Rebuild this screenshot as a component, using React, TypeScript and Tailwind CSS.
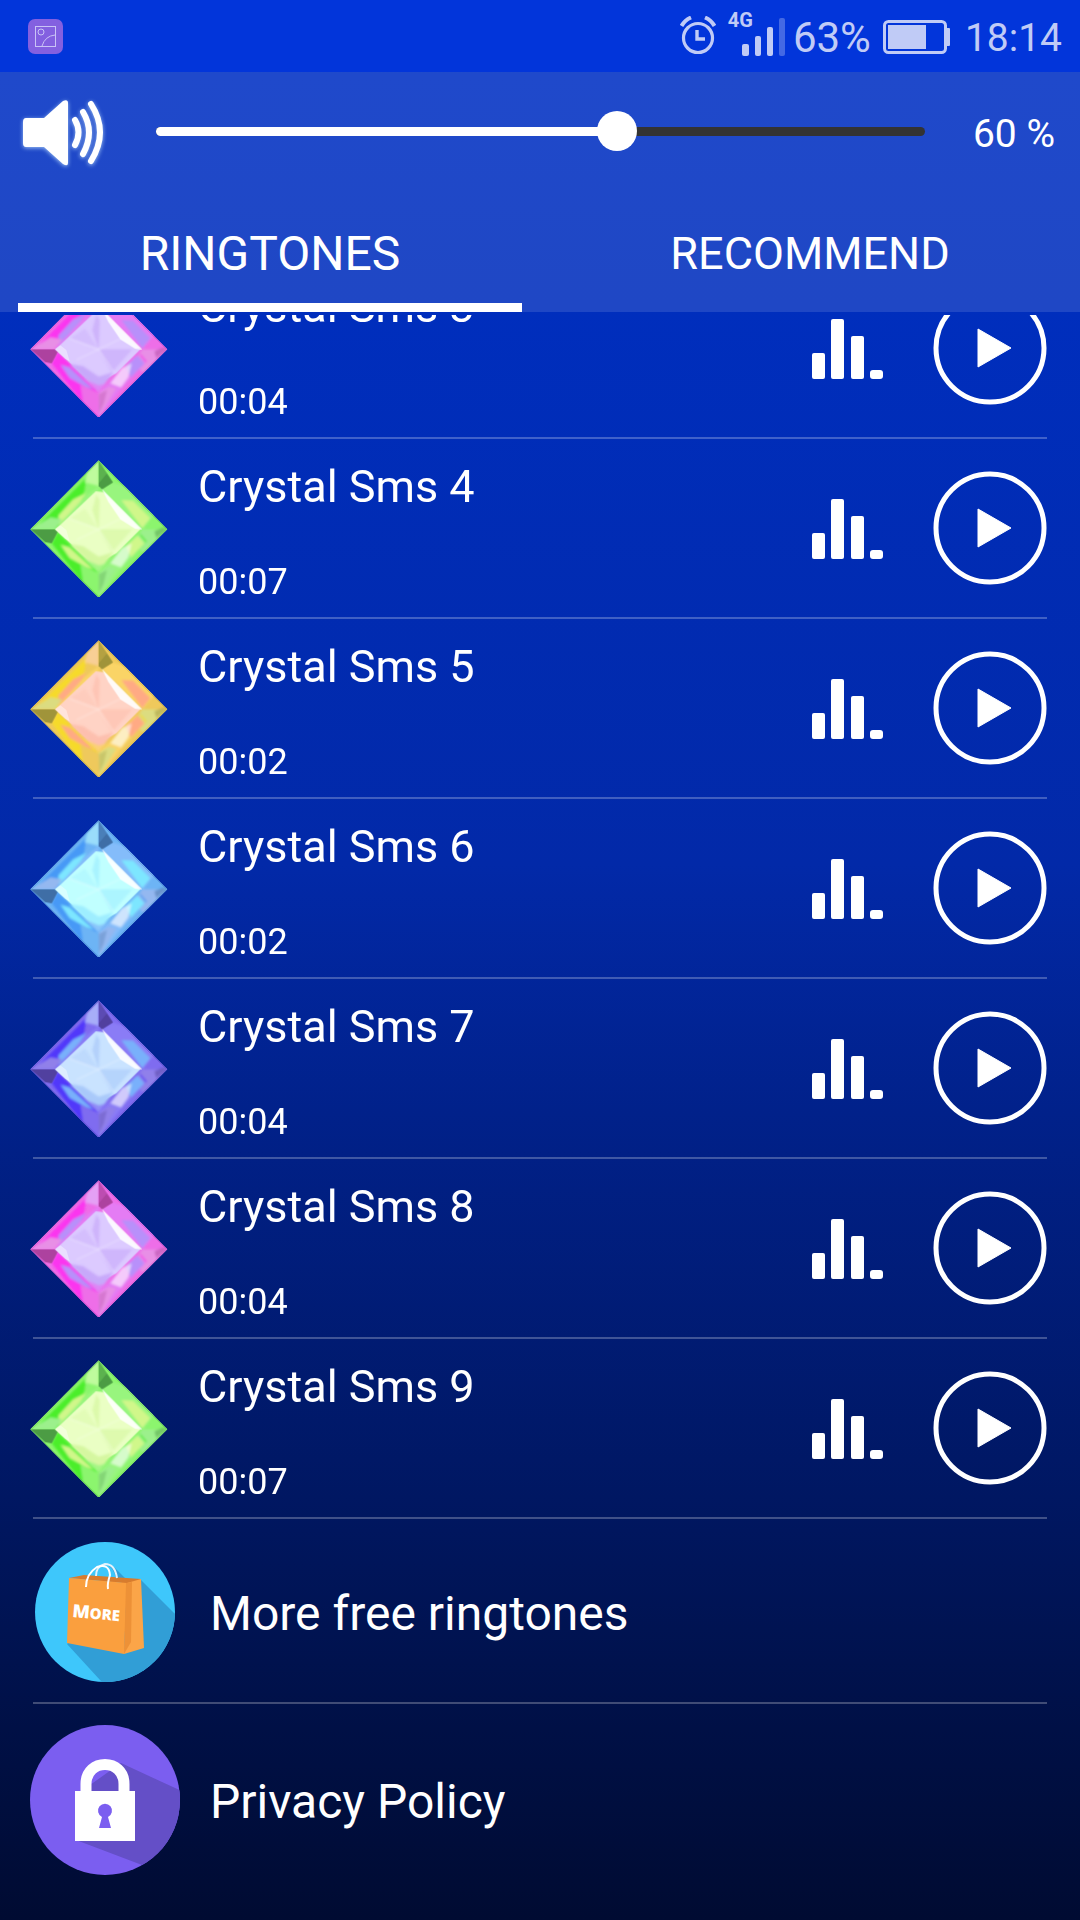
import { useState } from "react";

type GemPalette = {
  rim: string;
  deep: string;
  tint: string;
  patch: string;
  dark: string;
  inner: string;
  shade: string;
  soft: string;
};

const palettes: Record<string, GemPalette> = {
  pink: { rim: "#ee6ee8", deep: "#fb35ef", tint: "#e47cf4", patch: "#b890fa", dark: "#ad429f", inner: "#dccaff", shade: "#c7a9fa", soft: "#e88fe6" },
  green: { rim: "#8cf56e", deep: "#4bee2c", tint: "#98f57e", patch: "#d0f78a", dark: "#4c9c44", inner: "#eaffc4", shade: "#d5f7a0", soft: "#9cf08c" },
  gold: { rim: "#efc95c", deep: "#f6da2c", tint: "#fad466", patch: "#ffaa84", dark: "#a0943a", inner: "#ffd3c5", shade: "#fdbfae", soft: "#dcdc80" },
  sky: { rim: "#6db4f5", deep: "#4799f6", tint: "#84bcfa", patch: "#7de6ff", dark: "#3f6ea6", inner: "#c0ffff", shade: "#9eeeff", soft: "#94b8f0" },
  violet: { rim: "#7f6cf0", deep: "#5137fa", tint: "#8a7cf6", patch: "#79b0fb", dark: "#51409f", inner: "#c9e3ff", shade: "#a9c9fa", soft: "#9080ea" },
};

function Gem({ color, id }: { color: string; id: string }) {
  const p = palettes[color];
  return (
    <svg viewBox="31 27 414 414" className="size-[138px] shrink-0" aria-hidden="true">
      <clipPath id={`${id}-edge`}>
        <polygon points="237,30 444,238 237,444 31,238" />
      </clipPath>
      <filter id={`${id}-soft`}>
        <feGaussianBlur stdDeviation="3" />
      </filter>
      <g clipPath={`url(#${id}-edge)`}>
        <polygon points="237,30 444,238 237,444 31,238" fill={p.rim} />
        <g filter={`url(#${id}-soft)`}>
          <polygon points="200,84 190,150 106,238 60,222" fill={p.deep} />
          <polygon points="160,148 200,128 176,166 116,226 116,196" fill={p.patch} />
          <polygon points="237,108 237,134 132,238 106,238 190,146" fill={p.tint} />
          <polygon points="237,32 237,108 195,97 203,68" fill={p.inner} opacity="0.55" />
          <polygon points="280,97 320,110 404,196 368,238 247,118" fill={p.tint} />
          <polygon points="305,150 340,152 392,204 368,234" fill={p.patch} />
          <polygon points="368,238 442,238 372,308 340,282" fill={p.soft} />
          <polygon points="404,244 430,232 442,238 410,264" fill={p.dark} opacity="0.5" />
          <polyline points="362,254 380,276" fill="none" stroke={p.deep} strokeWidth="6" opacity="0.6" />
          <polygon points="33,238 106,238 128,208 92,202" fill={p.soft} />
          <polygon points="96,280 114,246 237,368 237,442 180,388" fill={p.deep} />
          <polygon points="122,284 150,292 222,358 200,352 150,324" fill={p.patch} />
          <polygon points="182,344 237,368 237,440 190,396" fill={p.rim} />
          <polygon points="237,368 350,256 376,280 300,362 237,442" fill={p.tint} />
          <polygon points="318,290 354,256 374,280 334,322" fill={p.patch} />
          <polygon points="272,340 306,294 336,280 326,322 304,352" fill="#ffffff" opacity="0.6" />
          <polygon points="237,368 268,350 290,356 240,436" fill={p.soft} />
          <polygon points="238,372 262,360 252,400 238,430" fill={p.dark} opacity="0.3" />
        </g>
        <polygon points="237,32 280,97 247,118 237,108" fill={p.dark} />
        <polygon points="237,32 262,70 237,100" fill={p.rim} opacity="0.25" />
        <polygon points="33,238 106,238 114,246 96,280 76,276" fill={p.dark} />
        <polygon points="120,226 228,124 252,126 362,238 290,310 237,338 220,342 106,238" fill={p.inner} />
        <g filter={`url(#${id}-soft)`}>
          <polygon points="150,282 190,288 237,320 282,306 237,364" fill={p.shade} />
          <polygon points="190,326 237,346 262,340 237,368" fill={p.tint} opacity="0.8" />
          <polygon points="230,134 240,150 237,238 218,180" fill={p.shade} opacity="0.7" />
          <polygon points="237,238 338,238 276,308" fill={p.shade} opacity="0.6" />
          <polygon points="237,238 150,206 196,176" fill={p.shade} opacity="0.35" />
          <polyline points="150,206 237,238 282,306" fill="none" stroke="#ffffff" strokeWidth="3" opacity="0.5" />
          <polyline points="170,270 237,238 316,200" fill="none" stroke="#ffffff" strokeWidth="3" opacity="0.4" />
        </g>
        <polygon points="246,116 368,238 346,236 302,208 266,156" fill="#ffffff" opacity="0.88" />
        <polygon points="106,238 122,226 140,240 150,274 136,266" fill="#ffffff" opacity="0.4" />
      </g>
      <polygon points="237,34 440,238 237,440 35,238" fill="none" stroke={p.dark} strokeWidth="3" opacity="0.3" />
    </svg>
  );
}

function SpeakerIcon() {
  return (
    <svg viewBox="0 0 90 72" className="h-[72px] w-[90px] drop-shadow-[0_1px_2px_rgba(190,225,255,0.8)]" fill="none" aria-hidden="true">
      <path d="M8 22H26L45 5Q50 3 50 7V67Q50 71 45 68L26 51H8Q5 51 5 47V26Q5 22 8 22Z" fill="#fff" />
      <path d="M57 24Q64 36 57 49M65 16Q77 36 65 58M73 8Q91 36 73 65" stroke="#fff" strokeWidth="6" strokeLinecap="round" />
    </svg>
  );
}

function BarsIcon() {
  return (
    <svg viewBox="0 0 72 62" className="h-[62px] w-[72px]" fill="#fff" aria-hidden="true">
      <rect x="0" y="36" width="13" height="26" rx="2" />
      <rect x="19" y="2" width="13" height="60" rx="2" />
      <rect x="39" y="19" width="13" height="43" rx="2" />
      <rect x="58" y="53" width="13" height="9" rx="3" />
    </svg>
  );
}

function PlayIcon() {
  return (
    <svg viewBox="0 0 114 114" className="size-[114px]" aria-hidden="true">
      <circle cx="57" cy="57" r="54" fill="none" stroke="#fff" strokeWidth="5" />
      <path d="M45 38L78 57L45 76Z" fill="#fff" stroke="#fff" strokeWidth="1" strokeLinejoin="round" />
    </svg>
  );
}

function MoreIcon() {
  return (
    <svg viewBox="0 0 140 140" className="size-[140px]" aria-hidden="true">
      <clipPath id="more-disc">
        <circle cx="70" cy="70" r="70" />
      </clipPath>
      <g clipPath="url(#more-disc)">
        <rect width="140" height="140" fill="#3ec7fb" />
        <path d="M105 37L150 82V150H76L32 102Z" fill="#319ed6" />
        <path d="M70 22Q78 24 81 36L92 38L80 26Z" fill="#319ed6" />
        <path d="M34 36L49 33L106 37L98 42Z" fill="#d77c2e" />
        <path d="M34 36L92 41L89 112L32 101Z" fill="#fa9f3e" />
        <path d="M92 41L106 37L109 106L89 112Z" fill="#fba548" />
        <path d="M91 41L97 40L96 100L89 112Z" fill="#ed9137" />
        <path d="M61 34Q61 24 70 22Q80 22 82 36" fill="none" stroke="#e3f2fb" strokeWidth="2" />
        <path d="M51 45Q51 32 62 25Q74 21 75 33Q72 42 73 47" fill="none" stroke="#fff" strokeWidth="2" />
        <text x="37" y="75" transform="rotate(5 37 75)" fill="#fff" fontFamily="Open Sans, sans-serif" fontWeight="800" fontSize="18">
          M<tspan fontSize="15">ORE</tspan>
        </text>
      </g>
    </svg>
  );
}

function LockIcon() {
  return (
    <svg viewBox="0 0 150 150" className="size-[150px]" aria-hidden="true">
      <clipPath id="lock-disc">
        <circle cx="75" cy="75" r="75" />
      </clipPath>
      <g clipPath="url(#lock-disc)">
        <rect width="150" height="150" fill="#7b5ef0" />
        <path d="M91 38L160 70V165L112 140L46 115L60 60Z" fill="#644fc7" />
      </g>
      <path d="M56 68V59C56 33 94 33 94 59V68" fill="none" stroke="#fff" strokeWidth="11" />
      <rect x="45" y="66" width="60" height="50" fill="#fff" />
      <path d="M72 92A7 7 0 1 1 78 92L81 103H69Z" fill="#7b5ef0" />
    </svg>
  );
}

function StatusBar() {
  return (
    <div className="flex h-[72px] items-center justify-between bg-[#0235da] pr-[18px] pl-7 text-[#c0cbf6]">
      <svg viewBox="0 0 35 35" className="size-[35px]" fill="none" aria-hidden="true">
        <rect width="35" height="35" rx="7" fill="#8360e0" />
        <g stroke="#c9c3f6" strokeWidth="1">
          <rect x="7.5" y="7.5" width="20" height="20" />
          <circle cx="13" cy="13" r="3" />
          <path d="M14 27Q17 17 27 16" />
        </g>
      </svg>
      <div className="flex items-center">
        <svg viewBox="0 0 36 40" className="mr-3 h-10 w-9" fill="none" stroke="currentColor" aria-hidden="true">
          <circle cx="18" cy="22" r="14.5" strokeWidth="3.2" />
          <path d="M17 14V23H25" strokeWidth="3.4" />
          <path d="M1.5 10Q5 4 11 1.5M34.5 10Q31 4 25 1.5" strokeWidth="4" />
        </svg>
        <div className="flex h-12 items-start">
          <span className="text-xl leading-4 font-bold">4G</span>
          <svg viewBox="0 0 44 44" className="mt-1 -ml-3 h-11 w-11" fill="currentColor" aria-hidden="true">
            <rect x="1" y="28" width="7" height="12" rx="2" />
            <rect x="14" y="20" width="6" height="20" rx="2" />
            <rect x="26" y="11" width="6" height="29" rx="2" />
            <rect x="38" y="2" width="6" height="38" rx="2" opacity="0.35" />
          </svg>
        </div>
        <span className="ml-2 pt-1 text-[42px] leading-[48px]">63%</span>
        <svg viewBox="0 0 67 34" className="mt-[2px] mr-[15px] ml-3 h-[34px] w-[67px]" fill="none" aria-hidden="true">
          <rect x="1.5" y="1.5" width="61" height="31" rx="4" stroke="currentColor" strokeWidth="3" />
          <rect x="5" y="5" width="38" height="24" fill="currentColor" />
          <rect x="63" y="8" width="4" height="18" rx="1" fill="currentColor" />
        </svg>
        <span className="pt-1 text-[39px] leading-[48px]">18:14</span>
      </div>
    </div>
  );
}

const tones = [
  { title: "Crystal Sms 3", time: "00:04", gem: "pink" },
  { title: "Crystal Sms 4", time: "00:07", gem: "green" },
  { title: "Crystal Sms 5", time: "00:02", gem: "gold" },
  { title: "Crystal Sms 6", time: "00:02", gem: "sky" },
  { title: "Crystal Sms 7", time: "00:04", gem: "violet" },
  { title: "Crystal Sms 8", time: "00:04", gem: "pink" },
  { title: "Crystal Sms 9", time: "00:07", gem: "green" },
];

export default function App() {
  const [volume, setVolume] = useState(60);
  const [tab, setTab] = useState("RINGTONES");

  return (
    <div className="flex min-h-screen flex-col bg-[linear-gradient(to_bottom,#0031c6_0%,#0030c4_4%,#002ebd_16%,#0229a8_45%,#01218a_58%,#001762_78%,#001046_90%,#000b32_100%)] font-[Roboto,sans-serif] text-white">
      <StatusBar />
      <header className="bg-white/12">
        <div className="flex h-[120px] items-start pt-6 pr-[25px] pl-[18px]">
          <button type="button" aria-label="Mute">
            <SpeakerIcon />
          </button>
          <div className="relative mt-[31px] ml-12 h-[9px] flex-1 rounded-full bg-[#333]">
            <div className="h-full rounded-full bg-white" style={{ width: `${volume}%` }} />
            <input
              type="range"
              aria-label="Volume"
              min={0}
              max={100}
              value={volume}
              onChange={(e) => setVolume(Number(e.target.value))}
              className="absolute -inset-x-5 -top-4 h-10 appearance-none bg-transparent [&::-webkit-slider-thumb]:size-10 [&::-webkit-slider-thumb]:appearance-none [&::-webkit-slider-thumb]:rounded-full [&::-webkit-slider-thumb]:bg-white"
            />
          </div>
          <output className="mt-[14px] w-[130px] text-right text-[39px] leading-[48px]">{volume} %</output>
        </div>
        <div role="tablist" className="grid h-[120px] grid-cols-2">
          {["RINGTONES", "RECOMMEND"].map((name) => (
            <button
              key={name}
              type="button"
              role="tab"
              aria-selected={tab === name}
              onClick={() => setTab(name)}
              className="group flex flex-col px-[18px] text-[45px] aria-selected:text-[48px]"
            >
              <span className="flex flex-1 items-center justify-center self-stretch pt-3">{name}</span>
              <span className="h-[9px] self-stretch group-aria-selected:bg-white" />
            </button>
          ))}
        </div>
      </header>
      <main className="mt-[3px] flex-1 overflow-hidden">
        <ul className="-mt-14">
          {tones.map((tone, index) => (
            <li key={tone.title} className="mr-[33px] ml-[30px]">
              <div className="flex h-[178px] items-center">
                <Gem color={tone.gem} id={`gem-${index}`} />
                <div className="ml-[30px] flex flex-1 flex-col gap-[46px] pt-2">
                  <h2 className="text-[45px] leading-[54px]">{tone.title}</h2>
                  <p className="text-4xl leading-[45px]">{tone.time}</p>
                </div>
                <button type="button" aria-label={`Set ${tone.title}`}>
                  <BarsIcon />
                </button>
                <button type="button" aria-label={`Play ${tone.title}`} className="ml-[49px]">
                  <PlayIcon />
                </button>
              </div>
              <div className="ml-[3px] h-[2px] bg-white/25" />
            </li>
          ))}
        </ul>
        <nav aria-label="More">
          <a href="#more" className="flex h-[183px] items-center pt-[2px] pl-[35px] text-[48px]">
            <MoreIcon />
            <span className="ml-[35px] pt-1">More free ringtones</span>
          </a>
          <div className="mx-[33px] h-[2px] bg-white/25" />
          <a href="#privacy" className="flex h-48 items-center pl-[30px] text-[48px]">
            <LockIcon />
            <span className="ml-[30px] pt-1">Privacy Policy</span>
          </a>
        </nav>
      </main>
    </div>
  );
}
